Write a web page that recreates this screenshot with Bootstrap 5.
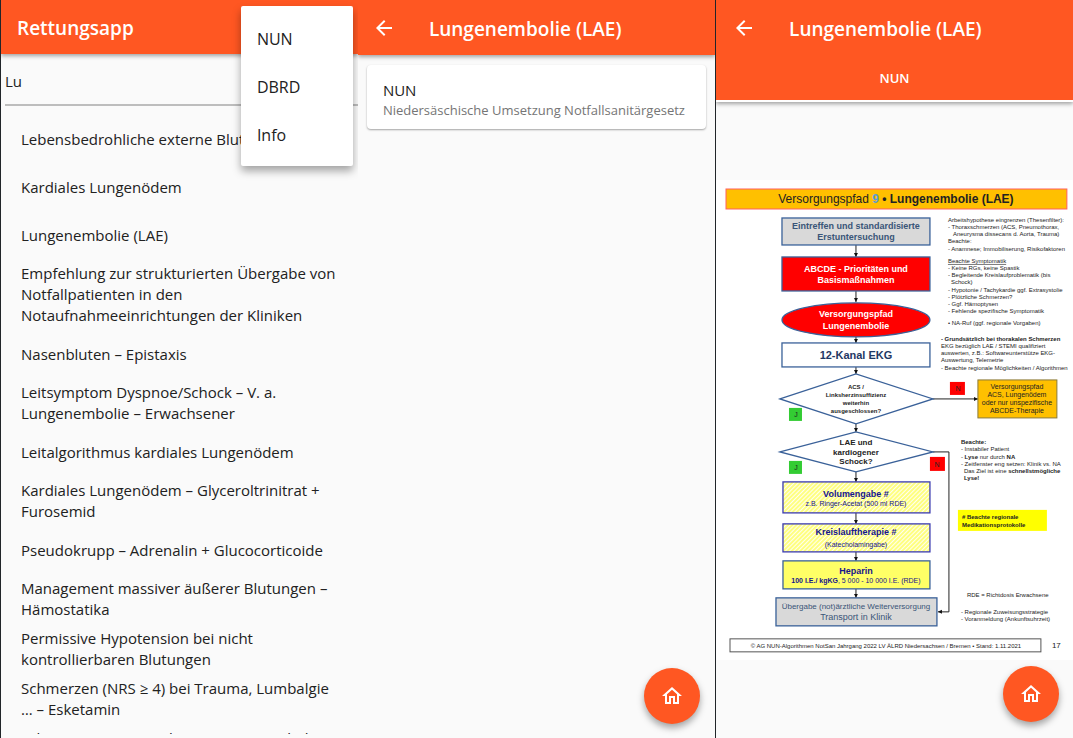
<!DOCTYPE html>
<html lang="de">
<head>
<meta charset="utf-8">
<meta name="viewport" content="width=device-width, initial-scale=1">
<title>Rettungsapp</title>
<link href="https://cdn.jsdelivr.net/npm/bootstrap@5.3.0/dist/css/bootstrap.min.css" rel="stylesheet">
<style>
  body { font-family: "Open Sans", "Noto Sans", sans-serif; font-size: 15px; line-height: 21px; color: #212121; background: #fafafa; }
  .screen { background: #fafafa; overflow: hidden; border-left: 1px solid #212529; }
  .screen-mid { border-left: 0; }
  .app-bar { background: #ff5722; color: #fff; min-height: 55px; padding: 2px 16px 0; box-shadow: 0 2px 4px rgba(0,0,0,.35); z-index: 2; }
  .screen-home .app-bar { min-height: 54px; }
  .screen-mid .app-bar { padding-left: 14px; }
  .screen-doc .app-bar { padding-top: 1px; }
  .app-title { font-size: 19px; line-height: 24px; font-weight: 600; }
  .icon-btn { width: 24px; height: 24px; margin-right: 33px; color: #fff; }
  .search-box { height: 52px; border: 0; border-bottom: 2px solid #bdbdbd; border-radius: 0; background: transparent; padding: 4px 0 0; color: #212121; font-size: 15px; }
  .hits { margin-bottom: 4px; padding-top: 9px; min-height: 0; overflow: hidden; }
  .hit { min-height: 48px; padding: 4px 16px 4px 20px; color: #212121; }
  .menu-card { top: 6px; right: 5px; width: 112px; z-index: 3; padding: 8px 0; background: #fff; border-radius: 2px; box-shadow: 0 5px 9px rgba(0,0,0,.35); }
  .menu-item { height: 48px; padding: 2px 16px 0; color: #212121; font-size: 16px; }
  .source-card { margin: 10px 9px; padding: 15px 16px 9px; border: 0; border-radius: 4px; background: #fff; box-shadow: 0 1px 2px rgba(0,0,0,.35); color: #212121; }
  .source-sub { font-size: 13px; line-height: 19px; color: #757575; }
  .tab-btn { height: 45px; font-size: 13px; font-weight: 600; color: #fff; border-bottom: 2px solid #fff; }
  .tab-bar { padding: 16px 0 0; }
  .fab { width: 56px; height: 56px; right: 15px; bottom: 14px; background: #ff5722; color: #fff; box-shadow: 0 4px 7px rgba(0,0,0,.35); z-index: 2; }
  .screen-doc .fab { right: 14px; bottom: 16px; }
  .sheet { background: #fff; font-family: "Liberation Sans", Arial, sans-serif; }
  .sheet text { font-size: 6px; fill: #222; }
  .sheet .mid { text-anchor: middle; }
  .sheet .bold { font-weight: 700; }
  .sheet .s7 { font-size: 7px; }
  .sheet .s8 { font-size: 8px; }
  .sheet .s9 { font-size: 9px; }
  .sheet .s11 { font-size: 11px; }
  .sheet .s12 { font-size: 12px; }
  .sheet .navy { fill: #1f3864; }
  .sheet .steel { fill: #3a5578; }
  .sheet .ink { fill: #15158c; }
  .sheet .inv { fill: #fff; }
</style>
</head>
<body>
<div class="d-flex vh-100 overflow-hidden">

  <section class="screen screen-home position-relative d-flex flex-column flex-fill w-100">
    <header class="app-bar d-flex align-items-center">
      <h1 class="app-title m-0">Rettungsapp</h1>
    </header>
    <div class="ps-1">
      <label class="visually-hidden" for="search">Suche</label>
      <input class="search-box form-control shadow-none" id="search" type="text" value="Lu">
    </div>
    <nav class="hits d-flex flex-column flex-fill" aria-label="Treffer">
      <a class="hit d-flex align-items-center flex-shrink-0 text-decoration-none" href="#">Lebensbedrohliche externe Blutungen</a>
      <a class="hit d-flex align-items-center flex-shrink-0 text-decoration-none" href="#">Kardiales Lungenödem</a>
      <a class="hit d-flex align-items-center flex-shrink-0 text-decoration-none" href="#">Lungenembolie (LAE)</a>
      <a class="hit d-flex align-items-center flex-shrink-0 text-decoration-none" href="#">Empfehlung zur strukturierten Übergabe von Notfallpatienten in den Notaufnahmeeinrichtungen der Kliniken</a>
      <a class="hit d-flex align-items-center flex-shrink-0 text-decoration-none" href="#">Nasenbluten – Epistaxis</a>
      <a class="hit d-flex align-items-center flex-shrink-0 text-decoration-none" href="#">Leitsymptom Dyspnoe/Schock – V. a. Lungenembolie – Erwachsener</a>
      <a class="hit d-flex align-items-center flex-shrink-0 text-decoration-none" href="#">Leitalgorithmus kardiales Lungenödem</a>
      <a class="hit d-flex align-items-center flex-shrink-0 text-decoration-none" href="#">Kardiales Lungenödem – Glyceroltrinitrat + Furosemid</a>
      <a class="hit d-flex align-items-center flex-shrink-0 text-decoration-none" href="#">Pseudokrupp – Adrenalin + Glucocorticoide</a>
      <a class="hit d-flex align-items-center flex-shrink-0 text-decoration-none" href="#">Management massiver äußerer Blutungen – Hämostatika</a>
      <a class="hit d-flex align-items-center flex-shrink-0 text-decoration-none" href="#">Permissive Hypotension bei nicht kontrollierbaren Blutungen</a>
      <a class="hit d-flex align-items-center flex-shrink-0 text-decoration-none" href="#">Schmerzen (NRS ≥ 4) bei Trauma, Lumbalgie … – Esketamin</a>
      <a class="hit d-flex align-items-center flex-shrink-0 text-decoration-none" href="#">Schmerzen (NRS ≥ 4) bei Trauma, Lumbalgie<br>… – Fentanyl</a>
    </nav>
    <div class="menu-card position-absolute d-flex flex-column">
      <button class="btn border-0 rounded-0 text-start menu-item" type="button">NUN</button>
      <button class="btn border-0 rounded-0 text-start menu-item" type="button">DBRD</button>
      <button class="btn border-0 rounded-0 text-start menu-item" type="button">Info</button>
    </div>
  </section>

  <section class="screen screen-mid position-relative d-flex flex-column flex-fill w-100">
    <header class="app-bar d-flex align-items-center">
      <button class="icon-btn btn p-0 border-0 d-flex" type="button" aria-label="Zurück">
        <svg width="24" height="24" viewBox="0 0 24 24" fill="currentColor" aria-hidden="true"><path d="M20 10H7.8l5.6-5.6L12 3l-8 8 8 8 1.4-1.4L7.8 12H20z"/></svg>
      </button>
      <h2 class="app-title m-0">Lungenembolie (LAE)</h2>
    </header>
    <a class="source-card card text-decoration-none" href="#">
      <span>NUN</span>
      <span class="source-sub">Niedersäschische Umsetzung Notfallsanitärgesetz</span>
    </a>
    <button class="fab btn rounded-circle border-0 p-0 position-absolute d-flex align-items-center justify-content-center" type="button" aria-label="Startseite">
      <svg width="24" height="24" viewBox="0 0 24 24" fill="currentColor" aria-hidden="true"><path d="M12 5.7l5 4.5V18h-2v-6H9v6H7v-7.8l5-4.5M12 3L2 12h3v8h6v-6h2v6h6v-8h3L12 3z"/></svg>
    </button>
  </section>

  <section class="screen screen-doc position-relative d-flex flex-column flex-fill w-100">
    <header class="app-bar px-0">
      <div class="d-flex align-items-center px-3 pt-3">
        <button class="icon-btn btn p-0 border-0 d-flex" type="button" aria-label="Zurück">
          <svg width="24" height="24" viewBox="0 0 24 24" fill="currentColor" aria-hidden="true"><path d="M20 10H7.8l5.6-5.6L12 3l-8 8 8 8 1.4-1.4L7.8 12H20z"/></svg>
        </button>
        <h2 class="app-title m-0">Lungenembolie (LAE)</h2>
      </div>
      <div class="tab-bar">
        <button class="tab-btn btn d-block w-100 rounded-0 border-top-0 border-start-0 border-end-0 p-0" type="button">NUN</button>
      </div>
    </header>
    <div class="flex-fill d-flex flex-column justify-content-center">
      <svg class="sheet w-100 d-block" viewBox="0 0 357 480" role="img" aria-label="Versorgungspfad 9, Lungenembolie">
        <defs>
          <marker id="tip" markerWidth="5" markerHeight="5" refX="4" refY="2" orient="auto" markerUnits="userSpaceOnUse"><path d="M0 0L4 2L0 4z" fill="#111"/></marker>
          <pattern id="hatch" width="3" height="3" patternUnits="userSpaceOnUse" patternTransform="rotate(45)"><rect width="3" height="3" fill="#fffff0"/><rect width="2" height="3" fill="#ffff80"/></pattern>
        </defs>

        <rect x="10" y="9" width="341" height="20" fill="#ffc000" stroke="#ff6060"/>
        <text class="mid s12" x="180" y="23">Versorgungspfad <tspan class="bold" fill="#5b9bd5">9</tspan> <tspan class="bold">• Lungenembolie (LAE)</tspan></text>

        <g stroke="#222" stroke-width="1" fill="none">
          <path d="M140 65V77" marker-end="url(#tip)"/><path d="M140 111V122" marker-end="url(#tip)"/>
          <path d="M140 157V163" marker-end="url(#tip)"/><path d="M140 187V194" marker-end="url(#tip)"/>
          <path d="M140 244V252" marker-end="url(#tip)"/><path d="M140 292V302" marker-end="url(#tip)"/>
          <path d="M140 333V344" marker-end="url(#tip)"/><path d="M140 372V381" marker-end="url(#tip)"/>
          <path d="M140 409V418" marker-end="url(#tip)"/><path d="M217 219H262" marker-end="url(#tip)"/>
          <path d="M217 272H233V432H222" marker-end="url(#tip)"/>
        </g>

        <g stroke="#3a6199" stroke-width="1.3">
          <rect x="66" y="38" width="148" height="27" fill="#d9d9d9"/>
          <rect x="66" y="77" width="148" height="34" fill="#f00"/>
          <ellipse cx="140" cy="140" rx="74" ry="17" fill="#f00"/>
          <rect x="66" y="163" width="148" height="24" fill="#fff"/>
          <path d="M64 219L140 194L217 219L140 244z" fill="#fff"/>
          <path d="M64 272L140 252L217 272L140 292z" fill="#fff"/>
          <rect x="67" y="302" width="147" height="31" fill="url(#hatch)" stroke="#3b3bb0"/>
          <rect x="67" y="344" width="147" height="28" fill="url(#hatch)" stroke="#3b3bb0"/>
          <rect x="67" y="381" width="147" height="28" fill="#ffff66"/>
          <rect x="60" y="418" width="161" height="28" fill="#d9d9d9"/>
          <rect x="262" y="200" width="79" height="38" fill="#ffc000" stroke="#8a7a3a" stroke-width="1"/>
        </g>

        <g>
          <text class="mid bold s9 steel" x="140" y="49">Eintreffen und standardisierte</text>
          <text class="mid bold s9 steel" x="140" y="60">Erstuntersuchung</text>
          <text class="mid bold s9 inv" x="140" y="92">ABCDE - Prioritäten und</text>
          <text class="mid bold s9 inv" x="140" y="103">Basismaßnahmen</text>
          <text class="mid bold s9 inv" x="140" y="137">Versorgungspfad</text>
          <text class="mid bold s9 inv" x="140" y="149">Lungenembolie</text>
          <text class="mid bold s11 navy" x="140" y="179">12-Kanal EKG</text>
          <text class="mid bold" x="140" y="209">ACS /</text>
          <text class="mid bold" x="140" y="217">Linksherzinsuffizienz</text>
          <text class="mid bold" x="140" y="225">weiterhin</text>
          <text class="mid bold" x="140" y="233">ausgeschlossen?</text>
          <text class="mid bold s8" x="140" y="265">LAE und</text>
          <text class="mid bold s8" x="140" y="275">kardiogener</text>
          <text class="mid bold s8" x="140" y="284">Schock?</text>
          <text class="mid bold s9 ink" x="140" y="317">Volumengabe #</text>
          <text class="mid s7 ink" x="140" y="326">z.B. Ringer-Acetat (500 ml RDE)</text>
          <text class="mid bold s9 ink" x="140" y="355">Kreislauftherapie #</text>
          <text class="mid s7 ink" x="140" y="367">(Katecholamingabe)</text>
          <text class="mid bold s9 ink" x="140" y="394">Heparin</text>
          <text class="mid s7 ink" x="140" y="403"><tspan class="bold">100 I.E./ kgKG</tspan>, 5 000 - 10 000 I.E. (RDE)</text>
          <text class="mid s8 steel" x="140" y="429">Übergabe (not)ärztliche Weiterversorgung</text>
          <text class="mid s9 steel" x="140" y="440">Transport in Klinik</text>
          <text class="mid s7" x="301" y="209">Versorgungspfad</text>
          <text class="mid s7" x="301" y="217">ACS, Lungenödem</text>
          <text class="mid s7" x="301" y="225">oder nur unspezifische</text>
          <text class="mid s7" x="301" y="233">ABCDE-Therapie</text>
        </g>

        <rect x="73" y="228" width="13" height="13" fill="#3c3"/><text class="mid s7" x="80" y="237">J</text>
        <rect x="73" y="281" width="13" height="13" fill="#3c3"/><text class="mid s7" x="80" y="290">J</text>
        <rect x="234" y="202" width="15" height="13" fill="#f00"/><text class="mid s7" x="242" y="211">N</text>
        <rect x="214" y="277" width="15" height="14" fill="#f00"/><text class="mid s7" x="221" y="287">N</text>

        <text x="232" y="42">Arbeitshypothese eingrenzen (Thesenfilter):</text>
        <text x="232" y="49">- Thoraxschmerzen (ACS, Pneumothorax,</text>
        <text x="237" y="56">Aneurysma dissecans d. Aorta, Trauma)</text>
        <text x="232" y="63">Beachte:</text>
        <text x="232" y="71">- Anamnese; Immobiliserung, Risikofaktoren</text>
        <text x="232" y="83" text-decoration="underline">Beachte Symptomatik</text>
        <text x="232" y="90">- Keine RGs, keine Spastik</text>
        <text x="232" y="97">- Begleitende Kreislaufproblematik (bis</text>
        <text x="235" y="104">Schock)</text>
        <text x="232" y="112">- Hypotonie / Tachykardie ggf. Extrasystolie</text>
        <text x="232" y="119">- Plötzliche Schmerzen?</text>
        <text x="232" y="126">- Ggf. Hämoptysen</text>
        <text x="232" y="133">- Fehlende spezifische Symptomatik</text>
        <text x="232" y="145">• NA-Ruf (ggf. regionale Vorgaben)</text>
        <text class="bold" x="225" y="161">- Grundsätzlich bei thorakalen Schmerzen</text>
        <text x="225" y="168">EKG bezüglich LAE / STEMI qualifiziert</text>
        <text x="225" y="175">auswerten, z.B.: Softwareunterstütze EKG-</text>
        <text x="225" y="182">Auswertung, Telemetrie</text>
        <text x="225" y="190">- Beachte regionale Möglichkeiten / Algorithmen</text>

        <text class="bold" x="245" y="264">Beachte:</text>
        <text x="245" y="271">- Instabiler Patient</text>
        <text x="245" y="279">- <tspan class="bold">Lyse</tspan> nur durch <tspan class="bold">NA</tspan></text>
        <text x="245" y="286">- Zeitfenster eng setzen: Klinik vs. NA</text>
        <text x="248" y="293">Das Ziel ist eine <tspan class="bold">schnellstmögliche</tspan></text>
        <text class="bold" x="248" y="300">Lyse!</text>

        <rect x="242" y="330" width="89" height="21" fill="#ff0"/>
        <text class="bold" x="246" y="339"># Beachte regionale</text>
        <text class="bold" x="246" y="347">Medikationsprotokolle</text>

        <text x="251" y="417">RDE = Richtdosis Erwachsene</text>
        <text x="245" y="434">- Regionale Zuweisungsstrategie</text>
        <text x="245" y="441">- Voranmeldung (Ankunftsuhrzeit)</text>

        <rect x="14" y="459" width="311" height="13" fill="#fff" stroke="#555"/>
        <text class="mid" x="170" y="468">© AG NUN-Algorithmen NotSan Jahrgang 2022 LV ÄLRD Niedersachsen / Bremen • Stand: 1.11.2021</text>
        <text class="s8" x="336" y="468">17</text>
      </svg>
    </div>
    <button class="fab btn rounded-circle border-0 p-0 position-absolute d-flex align-items-center justify-content-center" type="button" aria-label="Startseite">
      <svg width="24" height="24" viewBox="0 0 24 24" fill="currentColor" aria-hidden="true"><path d="M12 5.7l5 4.5V18h-2v-6H9v6H7v-7.8l5-4.5M12 3L2 12h3v8h6v-6h2v6h6v-8h3L12 3z"/></svg>
    </button>
  </section>
</div>
<script src="https://cdn.jsdelivr.net/npm/bootstrap@5.3.0/dist/js/bootstrap.bundle.min.js"></script>
</body>
</html>
